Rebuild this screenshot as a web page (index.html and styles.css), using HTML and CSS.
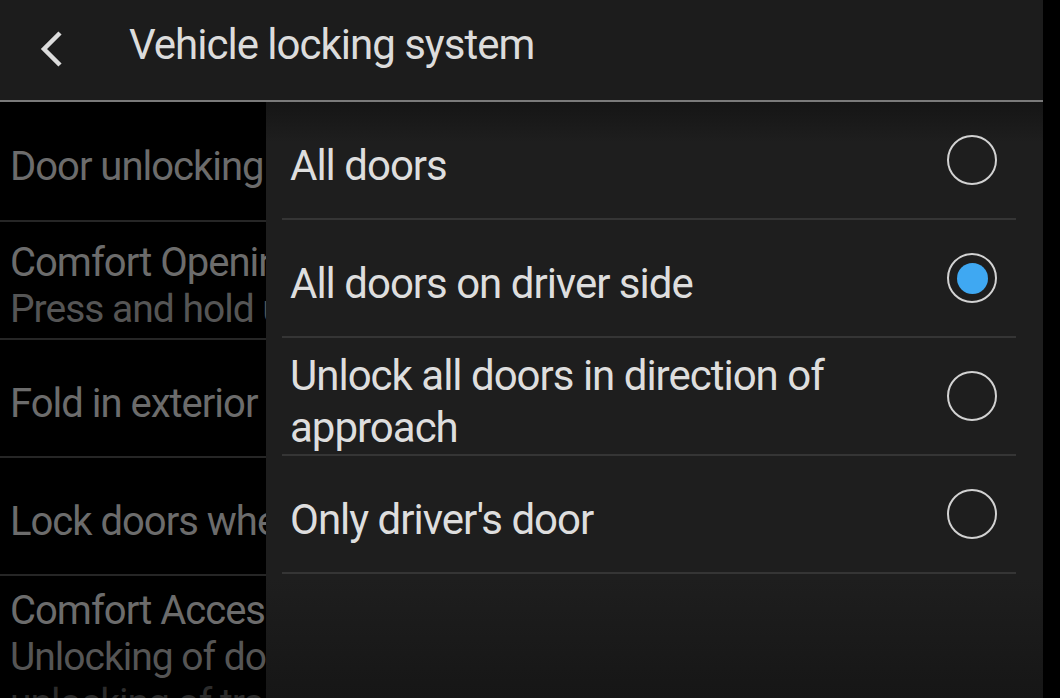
FILE: index.html
```html
<!DOCTYPE html>
<html>
<head>
<meta charset="utf-8">
<link rel="stylesheet" href="styles.css">
</head>
<body>
<div class="screen">
  <header class="header">
    <svg class="back" width="30" height="44" viewBox="0 0 30 44"><polyline points="22,6 6,22 22,38" fill="none" stroke="#dcdcdc" stroke-width="4.5" stroke-linecap="butt" stroke-linejoin="miter"/></svg>
    <h1 class="title">Vehicle locking system</h1>
  </header>
  <div class="content">
    <ul class="list">
      <li class="row row-first"><div class="row-title">Door unlocking</div></li>
      <li class="row"><div class="row-title">Comfort Opening</div><div class="row-sub">Press and hold unlock button</div></li>
      <li class="row"><div class="row-title">Fold in exterior mirrors</div></li>
      <li class="row"><div class="row-title">Lock doors when driving off</div></li>
      <li class="row row-last"><div class="row-title">Comfort Access</div><div class="row-sub">Unlocking of doors</div><div class="row-sub row-sub2">unlocking of trailer hitch</div></li>
    </ul>
    <div class="panel">
      <div class="option"><span class="opt-label">All doors</span><span class="radio"></span></div>
      <div class="option"><span class="opt-label">All doors on driver side</span><span class="radio radio-on"></span></div>
      <div class="option"><span class="opt-label">Unlock all doors in direction of approach</span><span class="radio"></span></div>
      <div class="option"><span class="opt-label">Only driver's door</span><span class="radio"></span></div>
    </div>
  </div>
</div>
</body>
</html>
```

FILE: styles.css
```css
* { box-sizing: border-box; }
html, body { margin: 0; padding: 0; background: #000; }
body {
  font-family: "Roboto", "Liberation Sans", sans-serif;
  width: 1060px;
  height: 698px;
  overflow: hidden;
}
.screen {
  width: 1043px;
  height: 698px;
  display: flex;
  flex-direction: column;
  background: #000;
}
.header {
  height: 102px;
  flex: none;
  background: #1c1c1c;
  border-bottom: 2px solid #7a7a7a;
  display: flex;
  align-items: center;
  padding-left: 38px;
}
.back { display: block; margin-top: -2px; }
.title {
  margin: -10px 0 0 61px;
  font-weight: normal;
  font-size: 42px;
  letter-spacing: -1px;
  color: #dcdcdc;
  line-height: 1;
}
.content {
  flex: 1;
  position: relative;
  overflow: hidden;
}
.list {
  list-style: none;
  margin: 0;
  padding: 0;
  width: 266px;
  overflow: hidden;
}
.row {
  height: 118px;
  border-bottom: 2px solid #262626;
  display: flex;
  flex-direction: column;
  justify-content: center;
  padding: 12px 0 0 10px;
  white-space: nowrap;
}
.row-first { height: 120px; }
.row-last { border-bottom: none; justify-content: flex-start; padding-top: 12px; height: 130px; }
.row-title {
  font-size: 40px;
  line-height: 46px;
  letter-spacing: -1px;
  color: #6c6c6c;
}
.row-sub {
  font-size: 39px;
  line-height: 46px;
  letter-spacing: -1px;
  color: #555;
}
.row-sub2 { color: #2c2c2c; }
.panel {
  position: absolute;
  left: 266px;
  top: 0;
  right: 0;
  bottom: 0;
  background: linear-gradient(#151515 0px, #1e1e1e 40px, #1e1e1e 80%, #161616 100%);
  padding: 0 27px 0 16px;
}
.option {
  height: 118px;
  border-bottom: 2px solid #353535;
  display: flex;
  align-items: center;
  justify-content: space-between;
  padding: 0 19px 0 8px;
}
.opt-label {
  font-size: 42px;
  line-height: 52px;
  letter-spacing: -1px;
  color: #dedede;
  max-width: 590px;
  padding-top: 12px;
}
.radio {
  flex: none;
  width: 50px;
  height: 50px;
  border-radius: 50%;
  border: 2.5px solid #d2d2d2;
  display: flex;
  align-items: center;
  justify-content: center;
}
.radio-on::after {
  content: "";
  width: 31px;
  height: 31px;
  border-radius: 50%;
  background: #3fa8f2;
}
```
